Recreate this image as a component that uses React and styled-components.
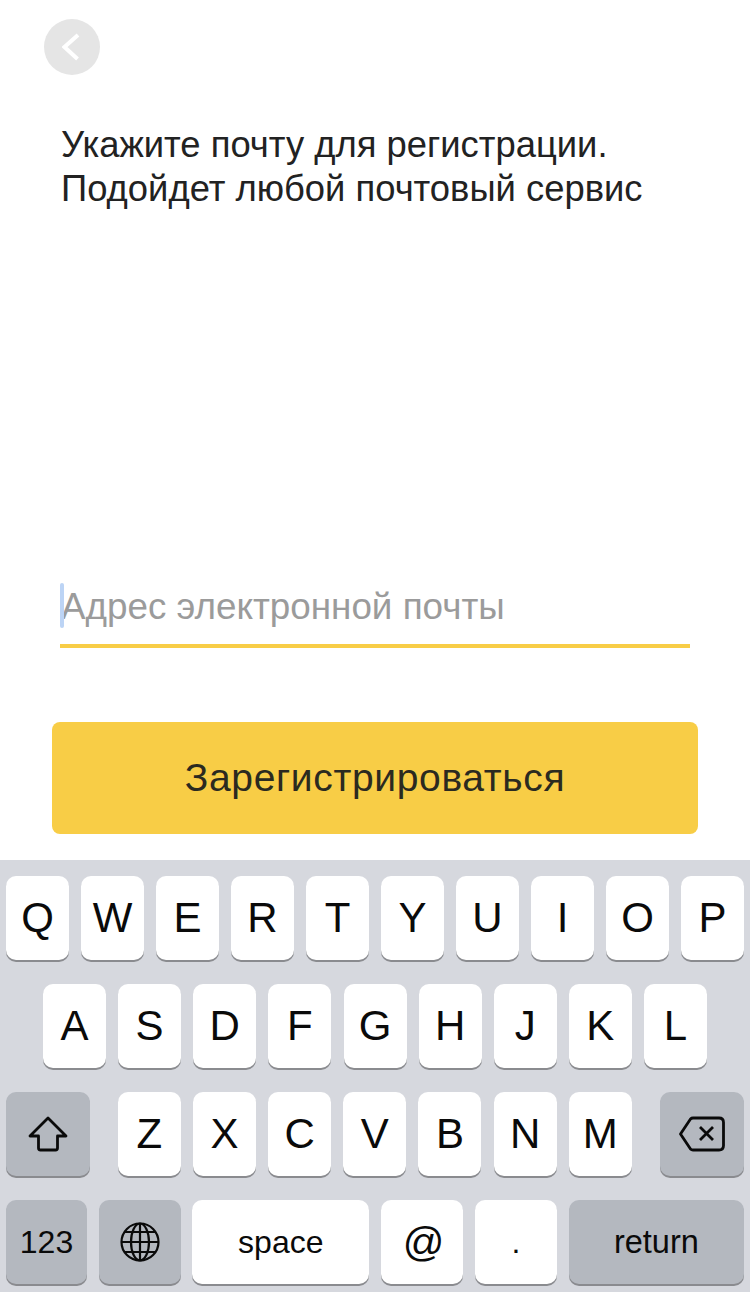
import React from 'react'
import styled, { createGlobalStyle } from 'styled-components'

const ROW_ONE = ['Q', 'W', 'E', 'R', 'T', 'Y', 'U', 'I', 'O', 'P']
const ROW_TWO = ['A', 'S', 'D', 'F', 'G', 'H', 'J', 'K', 'L']
const ROW_THREE = ['Z', 'X', 'C', 'V', 'B', 'N', 'M']

export default function App() {
  return (
    <Screen>
      <GlobalStyle />
      <Content>
        <BackButton aria-label="Назад">
          <svg width="20" height="28" viewBox="0 0 20 28" fill="none">
            <path d="M16 2 L2.5 14 L15.5 26" stroke="#fff" strokeWidth="4" />
          </svg>
        </BackButton>
        <Title>
          Укажите почту для регистрации.
          <br />
          Подойдет любой почтовый сервис
        </Title>
        <Field>
          <Caret />
          <Placeholder>Адрес электронной почты</Placeholder>
        </Field>
        <Submit>Зарегистрироваться</Submit>
      </Content>

      <Keyboard>
        <KeyRow>
          {ROW_ONE.map(k => (
            <LetterKey key={k}>{k}</LetterKey>
          ))}
        </KeyRow>
        <IndentRow>
          {ROW_TWO.map(k => (
            <LetterKey key={k}>{k}</LetterKey>
          ))}
        </IndentRow>
        <KeyRow>
          <ShiftKey aria-label="shift">
            <svg width="40" height="36" viewBox="0 0 40 36" fill="none">
              <path
                d="M20 2 L38 20 L29.5 20 L29.5 32 Q29.5 34 27.5 34 L12.5 34 Q10.5 34 10.5 32 L10.5 20 L2 20 Z"
                stroke="#0a0a0a"
                strokeWidth="2.8"
                strokeLinejoin="round"
              />
            </svg>
          </ShiftKey>
          <LetterGroup>
            {ROW_THREE.map(k => (
              <LetterKey key={k}>{k}</LetterKey>
            ))}
          </LetterGroup>
          <ShiftKey aria-label="delete">
            <svg width="46" height="36" viewBox="0 0 46 36" fill="none">
              <path
                d="M14 2 L40 2 Q44.5 2 44.5 6.5 L44.5 29.5 Q44.5 34 40 34 L14 34 Q12.5 34 11.5 33 L1.5 18 L11.5 3 Q12.5 2 14 2 Z"
                stroke="#0a0a0a"
                strokeWidth="2.8"
                strokeLinejoin="round"
              />
              <path d="M21 11 L34 24 M34 11 L21 24" stroke="#0a0a0a" strokeWidth="2.8" />
            </svg>
          </ShiftKey>
        </KeyRow>
        <BottomRow>
          <FnKey $width={81}>123</FnKey>
          <FnKey $width={82} aria-label="globe">
            <svg width="40" height="40" viewBox="0 0 40 40" fill="none" stroke="#0a0a0a" strokeWidth="2.2">
              <circle cx="20" cy="20" r="18.5" />
              <ellipse cx="20" cy="20" rx="9" ry="18.5" />
              <path d="M20 1.5 V38.5 M1.5 20 H38.5 M4.5 10 H35.5 M4.5 30 H35.5" />
            </svg>
          </FnKey>
          <WideKey $width={177}>space</WideKey>
          <AtKey $width={82}>@</AtKey>
          <WideKey $width={82.4}>.</WideKey>
          <ReturnKey>return</ReturnKey>
        </BottomRow>
      </Keyboard>
    </Screen>
  )
}

const GlobalStyle = createGlobalStyle`
  html, body {
    margin: 0;
    padding: 0;
    background: #fff;
  }
`

const Screen = styled.div`
  width: 750px;
  height: 1292px;
  display: flex;
  flex-direction: column;
  overflow: hidden;
  font-family: 'Liberation Sans', Arial, sans-serif;
`

const Content = styled.div`
  flex: 1;
  display: flex;
  flex-direction: column;
  padding: 19px 52px 26px;
`

const BackButton = styled.div`
  width: 56px;
  height: 56px;
  margin-left: -8px;
  border-radius: 50%;
  background: #e5e5e5;
  display: flex;
  align-items: center;
  justify-content: center;
`

const Title = styled.div`
  margin: 48px 0 0 9px;
  font-size: 36.4px;
  line-height: 44px;
  color: #222;
`

const Field = styled.div`
  margin: auto 0 0 8px;
  width: 630px;
  height: 66px;
  box-sizing: border-box;
  border-bottom: 4px solid #f8cd46;
  display: flex;
  align-items: center;
  position: relative;
`

const Caret = styled.div`
  position: absolute;
  left: 0;
  top: 1px;
  width: 4px;
  height: 45px;
  border-radius: 2px;
  background: #bcd4f5;
`

const Placeholder = styled.span`
  margin: 0 0 12px 1px;
  font-size: 36.8px;
  color: #9b9b9b;
`

const Submit = styled.div`
  margin-top: 74px;
  height: 112px;
  width: 646px;
  border-radius: 8px;
  background: #f8cd46;
  display: flex;
  align-items: center;
  justify-content: center;
  font-size: 39px;
  letter-spacing: 0.65px;
  color: #2b2a20;
`

const Keyboard = styled.div`
  height: 432px;
  box-sizing: border-box;
  padding: 16px 6px 0;
  background: #d6d8de;
  display: flex;
  flex-direction: column;
  gap: 24px;
`

const KeyRow = styled.div`
  height: 84px;
  display: flex;
  justify-content: space-between;
  gap: 12px;
`

const IndentRow = styled(KeyRow)`
  justify-content: flex-start;
  padding-left: 37px;
  gap: 12.13px;
`

const LetterGroup = styled.div`
  display: flex;
  gap: 12.17px;
  margin-left: -0.5px;
`

const BottomRow = styled(KeyRow)`
  gap: 11.67px;
`

const BaseKey = styled.div`
  height: 84px;
  border-radius: 10px;
  box-shadow: 0 2px 0 #8a8b8f;
  display: flex;
  align-items: center;
  justify-content: center;
  color: #0a0a0a;
`

const LetterKey = styled(BaseKey)`
  width: 63px;
  background: #fff;
  font-size: 42px;
`

const ShiftKey = styled(BaseKey)`
  width: 84px;
  background: #b4b8bf;
`

const FnKey = styled(BaseKey)`
  width: ${p => p.$width}px;
  background: #b4b8bf;
  font-size: 32px;
`

const ReturnKey = styled(FnKey)`
  flex: 1;
  font-size: 32.5px;
`

const WideKey = styled(BaseKey)`
  width: ${p => p.$width}px;
  background: #fff;
  font-size: 32px;
`

const AtKey = styled(WideKey)`
  padding-left: 3px;
  box-sizing: border-box;
  font-size: 41px;
`
